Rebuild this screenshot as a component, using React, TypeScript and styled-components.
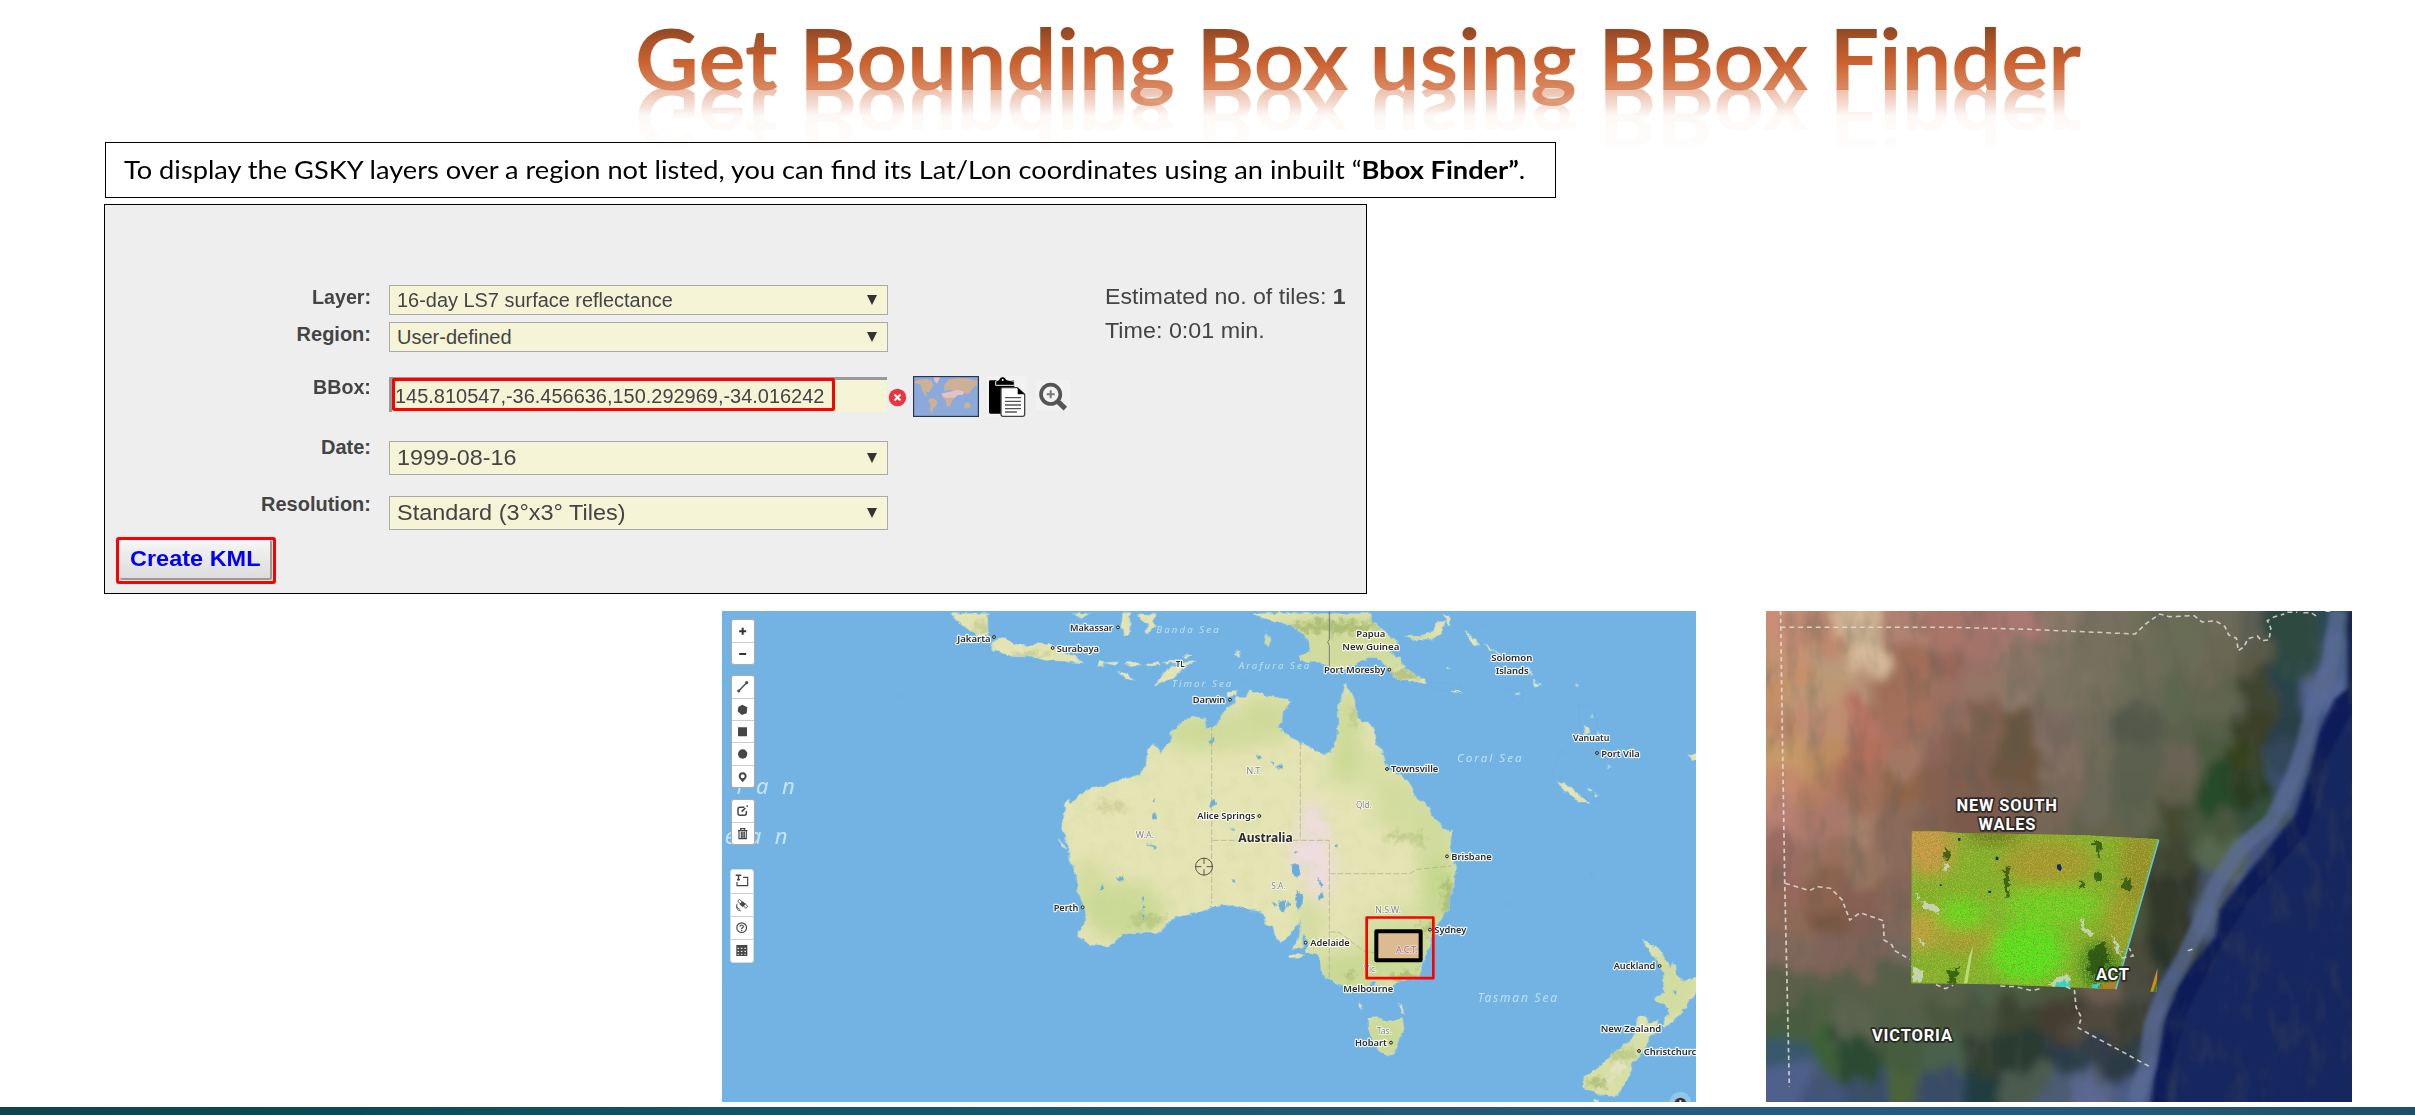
import React, { useLayoutEffect, useRef, useState } from 'react';
import styled, { createGlobalStyle } from 'styled-components';

const GlobalStyle = createGlobalStyle`
  * { box-sizing: border-box; }
  body { margin: 0; background: #fff; overflow: hidden; }
`;

const Slide = styled.main`
  display: flex;
  flex-direction: column;
  align-items: flex-start;
  width: 2415px;
  height: 1115px;
  overflow: hidden;
  background: #fff;
  font-family: 'Liberation Sans', Arial, sans-serif;
  color: #444;
`;

/* ---------- text that is condensed or widened to a set width ---------- */

const FitBox = styled.span<{ $origin: string }>`
  display: inline-block;
  white-space: nowrap;
  transform-origin: ${(p) => p.$origin} center;
`;

function Fit({ width, origin = 'left', children }: { width: number; origin?: string; children: React.ReactNode }) {
  const ref = useRef<HTMLSpanElement>(null);
  const [scale, setScale] = useState(1);
  useLayoutEffect(() => {
    if (ref.current) setScale(width / ref.current.offsetWidth);
  }, [width]);
  return (
    <FitBox ref={ref} $origin={origin} style={{ transform: `scaleX(${scale})` }}>
      {children}
    </FitBox>
  );
}

/* ---------- heading ---------- */

const TitleRow = styled.header`
  height: 142px;
  padding: 7px 0 0 635px;
`;

const Title = styled.h1`
  margin: 0;
  font: 700 84px/102px Lato, Carlito, Calibri, sans-serif;
`;

const TitleText = styled.span`
  position: relative;
  display: block;
  color: transparent;
  background: linear-gradient(#84421f 16px, #a9532a 34px, #cc6230 56px, #d98a63 82px, #e3a587 101px);
  -webkit-background-clip: text;
  background-clip: text;

  &::after {
    content: attr(data-text);
    position: absolute;
    left: 0;
    top: 61px;
    color: #d98058;
    transform: scaleY(-1);
    -webkit-mask-image: linear-gradient(to top, transparent 20px, rgba(0, 0, 0, 0.5) 21px, rgba(0, 0, 0, 0.28) 36px, rgba(0, 0, 0, 0.05) 48px, rgba(0, 0, 0, 0.02) 78px, transparent 82px);
    mask-image: linear-gradient(to top, transparent 20px, rgba(0, 0, 0, 0.5) 21px, rgba(0, 0, 0, 0.28) 36px, rgba(0, 0, 0, 0.05) 48px, rgba(0, 0, 0, 0.02) 78px, transparent 82px);
  }
`;

const Note = styled.p`
  flex: none;
  width: 1451px;
  height: 56px;
  margin: 0 0 0 105px;
  padding-left: 18px;
  border: 1.5px solid #000;
  background: #fff;
  font: 400 25px/53px Lato, Carlito, Calibri, sans-serif;
  color: #000;
`;

/* ---------- form ---------- */

const Panel = styled.section`
  display: flex;
  flex: none;
  width: 1263px;
  height: 390px;
  margin: 6px 0 0 104px;
  padding-top: 80px;
  border: 1.5px solid #000;
  background: #eee;
`;

const Fields = styled.div`
  flex: none;
  width: 1000px;
`;

const Row = styled.div<{ $gap: number }>`
  display: flex;
  align-items: flex-start;
  margin-bottom: ${(p) => p.$gap}px;
`;

const Label = styled.label<{ $lift?: number }>`
  width: 266px;
  height: 24px;
  margin-top: ${(p) => -(p.$lift ?? 0)}px;
  margin-right: 18px;
  text-align: right;
  font-size: 20px;
  font-weight: 700;
  line-height: 24px;
`;

const Select = styled.div<{ $tall?: boolean }>`
  display: flex;
  align-items: center;
  justify-content: space-between;
  width: 499px;
  height: ${(p) => (p.$tall ? 34 : 30)}px;
  padding: 0 10px 0 7px;
  border: 1.5px solid #a9a9a9;
  background: #f5f4d7;
  font-size: ${(p) => (p.$tall ? 22 : 20)}px;
  line-height: 24px;
`;

const Arrow = styled.span`
  width: 0;
  height: 0;
  border: solid transparent;
  border-width: 10px 5.5px 0;
  border-top-color: #333;
`;

const BoxInput = styled.div`
  width: 498px;
  height: 35px;
  border-top: 3px solid #999;
  border-left: 3px solid #999;
  background: #f5f4d7;
`;

const Highlight = styled.div`
  width: 443px;
  height: 33px;
  margin-top: -2px;
  border: 3px solid #f00;
  border-radius: 2px;
  font-size: 20px;
  line-height: 30px;
`;

const Tools = styled.div`
  display: flex;
  align-items: center;
  height: 41px;
  margin: -1px 0 -5px 1px;
`;

const KmlFrame = styled.div`
  width: 160px;
  height: 47px;
  margin-left: 11px;
  padding: 0 3px;
  border: 3px solid #f00;
  border-radius: 3px;
`;

const KmlButton = styled.button`
  display: block;
  width: 152px;
  height: 40px;
  margin-left: -2px;
  padding: 0 0 0 10px;
  border: 0 solid #999;
  border-width: 0 2px 2px 0;
  border-radius: 2px;
  background: linear-gradient(#f6f6f6, #dcdcdc);
  font: 700 21.5px/32px 'Liberation Sans', Arial, sans-serif;
  text-align: left;
  color: #00f;
`;

const Stats = styled.div`
  font-size: 22px;
  line-height: 33.5px;
  margin-top: -5px;
`;

const Stat = styled.div`
  height: 33.5px;
`;

const ClearIcon = () => (
  <svg width="19" height="41" viewBox="0 0 19 41">
    <circle cx="9.5" cy="21.5" r="8.7" fill="#ea3440" />
    <path d="M6.5 18.5l6 6m0-6l-6 6" stroke="#fff" strokeWidth="2.2" />
  </svg>
);

const WorldIcon = () => (
  <svg width="66" height="41" viewBox="162 45 198 123" style={{ marginLeft: 6 }}>
    <rect x="164" y="47" width="194" height="119" fill="#8ca9dc" />
    <g fill="#cdb096">
      <path d="M166 60l18-4 20-2 14 6 6 14-8 10-6 10-10-2 6 16 8 4-12-6-12-16-6-20-18-4z" />
      <path d="M212 112l12 0 12 10-6 14-8 8-2 14-6-8 0-20-6-10z" />
      <path d="M256 72l12-16 24-4 28 0 38 8-4 12-12 8-10 16-10 4-10-8-10 10-8-12-22-4-16 4z" />
      <path d="M250 98l24-2 14 12-10 14-4 14-10 2-4-20-12-10z" />
      <path d="M316 128l12-6 8 14-8 7-12-3z" />
    </g>
    <path d="M224 49h20l-10 18-8-6zM246 98l26-6 24-6 20 6-4 10-16 0-8 8-30 0z" fill="#e3c2ca" />
    <rect x="163.500" y="46.500" width="195" height="120" fill="none" stroke="#26364d" strokeWidth="4" />
  </svg>
);

const PasteIcon = () => (
  <svg width="40" height="41" viewBox="386 45 120 123" style={{ marginLeft: 8 }}>
    <rect x="386" y="45" width="120" height="123" fill="#f2f2f2" />
    <path d="M392 62q0-4 4-4h68q4 0 4 4v20h-36v76h-36q-4 0-4-4z" fill="#000" />
    <path d="M412 73v-12l10-5q2-9 11-9t11 9l24 5v12z" fill="#000" stroke="#f2f2f2" strokeWidth="3" />
    <circle cx="433" cy="57" r="3" fill="#fff" />
    <path d="M428 84q0-4 4-4h45l22 20v60q0 6-6 6h-59q-6 0-6-6z" fill="#fff" stroke="#444" strokeWidth="4" />
    <path d="M478 80v20h21z" fill="#000" />
    <path d="M440 110h48M440 121h48M440 132h48M440 143h48M440 153h36" stroke="#555" strokeWidth="4" />
  </svg>
);

const MagnifyIcon = () => (
  <svg width="34" height="41" viewBox="532 45 102 123" style={{ marginLeft: 9 }}>
    <rect x="532" y="58" width="102" height="90" fill="#f2f2f2" />
    <circle cx="576" cy="100" r="29" fill="none" stroke="#555" strokeWidth="11" />
    <path d="M576 88v24M564 100h24" stroke="#777" strokeWidth="6" />
    <path d="M598 122l22 21" stroke="#555" strokeWidth="15" />
  </svg>
);

/* ---------- street map ---------- */

const Maps = styled.section`
  display: flex;
  flex: none;
  gap: 70px;
  height: 491px;
  margin: 17px 0 0 722px;
`;

const MapFrame = styled.div<{ $w: number }>`
  position: relative;
  flex: none;
  width: ${(p) => p.$w}px;
  height: 491px;
  overflow: hidden;
  & > svg { display: block; }
`;

const Toolbar = styled.div`
  position: absolute;
  left: 9px;
  top: 8px;
  display: flex;
  flex-direction: column;
`;

const ToolGroup = styled.div<{ $gap: number; $plain?: boolean }>`
  width: 23.500px;
  margin-top: ${(p) => p.$gap}px;
  margin-left: ${(p) => (p.$plain ? -0.7 : 0)}px;
  border: 1px solid ${(p) => (p.$plain ? '#d5dce2' : '#b5a9a4')};
  border-radius: 3px;
  background: #fff;
  overflow: hidden;
`;

const Tool = styled.div<{ $h: number }>`
  height: ${(p) => p.$h}px;
  & + & { border-top: 1px solid #ccc; }
  svg { display: block; }
`;

const C = '#464646';
const glyphs: Record<string, React.ReactNode> = {
  plus: <path d="M32 23v21M21.500 33.500h21" stroke="#333" strokeWidth="6" />,
  minus: <path d="M21.500 33h21" stroke="#333" strokeWidth="6" />,
  line: <g stroke={C} fill={C}><path d="M20 45L44 20" strokeWidth="4" /><circle cx="20" cy="45" r="4" /><circle cx="44" cy="20" r="4" /></g>,
  polygon: <path d="M31 17l15 8-2 18-15 5-12-11 2-13z" fill={C} />,
  square: <path d="M18 19h27v27H18z" fill={C} />,
  circle: <circle cx="32" cy="33" r="14" fill={C} />,
  pin: <path fillRule="evenodd" d="M32 19c-8 0-12 6-12 12 0 7 8 12 12 18 4-6 12-11 12-18 0-6-4-12-12-12zm0 6a6 6 0 110 12 6 6 0 010-12z" fill={C} />,
  edit: <g fill="none" stroke={C} strokeWidth="4.500"><path d="M37 22H24q-6 0-6 6v12q0 6 6 6h13q6 0 6-6v-7" /><path d="M29 35l11-11" strokeWidth="5" /><path d="M44 20l3-3" strokeWidth="5" /></g>,
  trash: <g fill="none" stroke={C} strokeWidth="3.500"><path d="M18 23h28M26 22v-5h12v5M21 24v23h22V24M28 26v20M32.500 26v20M37 26v20" /></g>,
  textbox: <g fill="none" stroke={C} strokeWidth="3.500"><path d="M14 16h17M22.500 16v13M18 29h9" strokeWidth="4.500" /><path d="M36 22h14v25H18V36" /></g>,
  satellite: <g fill="none" stroke={C} strokeWidth="2.500"><path d="M20 21l6-5 8 9-6 5zM37 34l6-5 7 9-6 5z" /><path d="M27 31l8-8 8 7-8 8z" fill={C} /><path d="M17 35q1 10 10 11M18 29q-6 20 12 22" /></g>,
  help: <g fill="none" stroke={C}><circle cx="32" cy="32" r="14.500" strokeWidth="3.500" /><path d="M27 29q0-5 5-5t5 5q0 3-5 5v3M32 39v4" strokeWidth="3.500" /></g>,
  grid: <g><path d="M16 15h33v33H16z" fill={C} /><path d="M19.500 23h5v4h-5zM29.500 23h5v4h-5zM40 23h5v4h-5zM19.500 32h5v4h-5zM29.500 32h5v4h-5zM40 32h5v4h-5zM19.500 41h5v3h-5zM29.500 41h5v3h-5zM40 41h5v3h-5z" fill="#ddd" /></g>,
};

const groups = [
  { gap: 0, h: 22, items: ['plus', 'minus'] },
  { gap: 9.5, h: 22.3, items: ['line', 'polygon', 'square', 'circle', 'pin'] },
  { gap: 11, h: 22, items: ['edit', 'trash'] },
  { gap: 24.5, h: 22.8, items: ['textbox', 'satellite', 'help', 'grid'], plain: true },
];

type Place = [string, number, number, number];
const cities: Place[] = [
  ['Jakarta', -248, 125, 100], ['Makassar', 90, 92, 128], ['Surabaya', 50, 155, 127], ['TL', 407, 201, 27],
  ['Darwin', 458, 309, 98], ['Papua', 949, 112, 87], ['New Guinea', 907, 151, 171], ['Port Moresby', 852, 220, 184],
  ['Solomon', 1354, 184, 123], ['Islands', 1367, 223, 99], ['Vanuatu', 1599, 423, 109], ['Port Vila', 1684, 470, 115],
  ['Townsville', 1053, 517, 142], ['Alice Springs', 472, 658, 174], ['Brisbane', 1234, 780, 121], ['Perth', 41, 932, 74],
  ['Adelaide', 811, 1037, 118], ['Sydney', 1183, 998, 96], ['Melbourne', 910, 1175, 150], ['Hobart', 945, 1338, 95],
  ['Auckland', 1721, 1107, 125], ['New Zealand', 1682, 1297, 182], ['Christchurch', 1811, 1364, 176],
];
const dots = [[-138, 111], [234, 82], [38, 144], [570, 299], [1048, 209], [1671, 459], [1041, 507], [658, 648], [1221, 769], [128, 922], [797, 1028], [1170, 989], [1053, 1328], [1859, 1098], [1797, 1353]];
const states: Place[] = [
  ['N.T.', 619, 521, 48], ['W.A.', 287, 714, 55], ['S.A.', 694, 868, 43], ['Qld.', 948, 623, 47],
  ['N.S.W.', 1006, 939, 77], ['Vic.', 972, 1117, 40], ['Tas.', 1010, 1303, 46],
];
const seas: [string, number, number, number, number][] = [
  ['Banda Sea', 349, 99, 187, 29], ['Arafura Sea', 596, 206, 212, 29], ['Timor Sea', 396, 261, 178, 29],
  ['Coral Sea', 1251, 487, 194, 35], ['Tasman Sea', 1313, 1206, 238, 36],
];

const australia = 'M908 246L920 262 935 300 945 345 955 360 975 358 988 372 995 385 1002 420 1015 440 1025 480 1045 507 1070 517 1095 535 1110 560 1125 592 1145 603 1160 615 1165 640 1185 655 1205 675 1220 695 1226 682 1222 740 1230 770 1238 795 1234 840 1222 885 1218 920 1195 948 1180 965 1168 990 1160 1020 1148 1060 1135 1100 1130 1122 1100 1130 1060 1140 1040 1158 1015 1150 1000 1150 995 1135 982 1135 980 1150 940 1155 900 1150 870 1140 845 1118 832 1100 832 1075 820 1050 800 1045 785 1050 797 1028 790 1000 778 992 780 1032 750 1038 770 1005 776 945 768 962 745 990 715 1022 700 1005 690 975 670 965 668 940 650 925 625 922 580 907 515 912 480 925 450 933 400 943 375 958 355 990 325 988 270 990 240 995 215 1020 190 1030 150 1028 105 1000 107 985 125 965 130 940 128 920 105 860 103 820 78 765 80 740 66 700 58 680 60 650 68 625 65 605 78 590 85 605 110 580 140 558 180 552 230 535 280 520 310 490 315 440 335 422 355 450 370 425 385 420 385 390 410 365 450 340 485 350 490 375 510 375 525 365 540 330 570 310 580 285 610 285 620 262 645 270 665 280 690 283 730 290 745 295 735 315 720 325 718 350 705 375 730 395 765 415 800 435 845 458 865 450 882 410 887 360 888 310 900 280z';
const islands = 'M-275 33H-165V98L-180 103-215 85-245 65z M-148 120L-140 108-115 105-85 125-30 130-15 120 15 125 50 135 65 155 100 165 125 180 90 178 60 175 10 173-40 160-100 158-150 142z M630 33L660 45 720 60 760 80 785 95 800 125 802 150 770 160 775 175 830 175 870 200 900 200 935 185 960 172 1000 160 1030 190 1060 225 1100 235 1150 243 1145 228 1090 205 1070 165 1040 150 1065 120 1050 110 1020 85 1000 65 985 60 985 33z M1085 97L1130 100 1170 90 1185 60 1205 55 1192 90 1165 112 1120 112z M1200 35L1222 45 1222 68 1212 62 1212 48z M240 33h20l2 35-4 28-16-2-4-30z M285 33l55 3-10 18 10 15-15 10-5 15-10-8 5-22-20-12z M92 33h45l-20 14z M672 90l12 20-8 24-10-14z M222 206l32 8 20 18-24-4z M335 248l20-24 30-30 40-14 36-4-40 20-25 28z M575 160l18-20-8 24z M425 160l24-4-16 10z M168 176l20 4-8 14-18-6z M190 180l36-2-8 10zM245 182l30-6 20 8-30 8zM310 184l40-6 5 8-40 4zM362 180l36-8-4 12z M552 266l34-2-8 14-20 2z M976 1248L1000 1245 1020 1255 1050 1255 1080 1248 1083 1280 1068 1320 1055 1350 1035 1357 1015 1350 990 1320 978 1280z M740 1058l24-6 18 6-12 8-28 2z M952 1198l8 8-4 14-6-8z M1068 1206l12 10 4 18-10-8z M1800 1010L1825 1025 1850 1045 1870 1075 1885 1100 1893 1080 1900 1115 1925 1135 1968 1125V1155L1950 1175 1930 1210 1895 1255 1870 1272 1862 1265 1880 1235 1880 1215 1835 1190 1840 1180 1865 1170 1862 1110 1840 1070 1815 1035z M1785 1245L1810 1240 1815 1260 1845 1255 1840 1290 1815 1310 1810 1330 1795 1355 1765 1380 1760 1420 1740 1450 1725 1478 1700 1480 1670 1475 1640 1465 1618 1450 1625 1425 1660 1400 1700 1360 1740 1330 1775 1300 1785 1265z M1652 1490l16 0-4 16-10 0z M1266 80l12 14 22 16 8 20-16-8-18-24z M1324 124l26 18-12 0z M1350 142l32 20-16-6z M1468 234l26 12-14 4z M1455 190l14 30-12-14z M1546 536l30 14 34 26 28 26-22-2-38-26-24-22z M1622 372l14 4 2 14-10 6z M1940 456l28-6v24l-20-2z M1636 552l8 8-4 6zM1656 570l8 8-8 2zM1646 338l2 6-4 0zM1664 390l4 6-4 2zM1694 490l6 6-5 2zM1600 244l8 4-8 2zM1210 196l10 2-6 4zM1222 266l16 0 20 4-24 2zM1422 270l14 4-10 2zM46 708l28 32-18-10z';
const lakes = 'M498 605l20-12 4 16-18 6z M330 634l8 0 0 12-8 0z M642 458l8 0 0 10-8 0z M702 488l14 0 0 12-10-2z M686 478l8 2-4 6z M502 414l12-6 0 8-10 6z M748 782l20 4 4 30-8 12-14-14z M764 864l14 20-4 24-8 8-4-24z M824 884l14-16 4 18-16 6z M825 828l16 18-4 8z M708 894l18 2 4 16-8 16-10-18z M736 900l8 12-10 2z M690 902l14 6-10 4z M564 678l14 8-4 0z M570 832l6 0 0 6-6 0z M226 826l12-4 6 14-12-4z M176 842l8 12-8 8z M300 880l6 12-6 4z M300 908l8 6-6 8z M298 936l8 4-4 8z M878 728l10-2-4 10z M312 724l30 8-4 4z M1890 1164l10-2 0 10-8 0z M756 748l10-4-6 8z M334 592l5 4-5 2z';

const greens: [number, number, number, number, number][] = [
  [250, 930, 120, 90, 0.75], [140, 860, 60, 90, 0.5], [560, 380, 200, 60, 0.55], [680, 320, 80, 50, 0.55],
  [910, 400, 45, 140, 0.7], [950, 500, 110, 70, 0.35], [1080, 610, 90, 90, 0.5], [1180, 740, 60, 130, 0.6],
  [1190, 880, 60, 110, 0.85], [1090, 1060, 130, 80, 0.75], [920, 1110, 110, 70, 0.8], [800, 970, 40, 100, 0.5],
  [1030, 1300, 80, 70, 0.8], [440, 400, 110, 50, 0.35], [1060, 980, 120, 80, 0.4], [1740, 1380, 140, 120, 0.4],
  [900, 120, 280, 90, 0.6], [1880, 1150, 90, 110, 0.5],
];
const ridges: [number, number, number, number, number][] = [
  [1205, 870, 18, 60, 0.5], [1150, 965, 35, 16, 0.45], [1085, 1110, 50, 12, 0.6], [908, 1108, 8, 18, 0.6], [1060, 690, 50, 12, 0.35],
  [1120, 700, 14, 30, 0.3], [300, 940, 50, 20, 0.3], [860, 60, 140, 18, 0.55], [1080, 205, 45, 18, 0.5], [190, 600, 50, 16, 0.25],
  [1650, 1430, 30, 18, 0.5], [1730, 1345, 50, 16, 0.35], [-45, 145, 60, 8, 0.4], [-200, 60, 25, 20, 0.3], [925, 325, 10, 40, 0.3],
];

const StreetMap = () => (
  <svg width="974" height="491" viewBox="-954 33 2922 1473" fontFamily="'Noto Sans', 'Open Sans', sans-serif">
    <defs>
      <filter id="coast" x="-5%" y="-5%" width="110%" height="110%">
        <feTurbulence type="fractalNoise" baseFrequency="0.045" numOctaves="3" seed="4" result="n" />
        <feDisplacementMap in="SourceGraphic" in2="n" scale="16" xChannelSelector="R" yChannelSelector="G" />
      </filter>
      <filter id="soft" x="-50%" y="-50%" width="200%" height="200%"><feGaussianBlur stdDeviation="24" /></filter>
      <filter id="soft2" x="-50%" y="-50%" width="200%" height="200%">
        <feGaussianBlur stdDeviation="7" result="b" />
        <feTurbulence type="fractalNoise" baseFrequency="0.05" numOctaves="3" seed="9" result="n" />
        <feDisplacementMap in="b" in2="n" scale="50" xChannelSelector="R" yChannelSelector="G" />
      </filter>
      <filter id="relief" x="0" y="0" width="100%" height="100%">
        <feTurbulence type="fractalNoise" baseFrequency="0.022" numOctaves="5" seed="12" />
        <feColorMatrix values="0 0 0 0 .64  0 0 0 0 .72  0 0 0 0 .38  2.600 0 0 0 -1.250" />
      </filter>
      <clipPath id="land"><path d={australia + islands} /></clipPath>
    </defs>
    <rect x="-954" y="33" width="2922" height="1473" fill="#72b3e4" />
    <g fill="none" stroke="#5f9fd0" strokeWidth="2" opacity=".28">
      <path d="M1615 315l35 0 20 40 2 80-20 0-34-50zM1565 450l80 70 40 60-20 30-60-30-70-60zM1120 240l80 30 60 5 0-20zM1390 265l60 10-4 40-30-20zM590 240l40 0" />
      <circle cx="-171" cy="238" r="7" /><circle cx="-430" cy="288" r="8" /><circle cx="1340" cy="70" r="10" /><circle cx="1400" cy="910" r="9" /><circle cx="1660" cy="822" r="8" />
    </g>
    <g filter="url(#coast)">
      <g transform="translate(8 8)">
        <path d={australia + islands} fill="#e5e4b4" stroke="#8fc6ea" strokeWidth="4" paintOrder="stroke" />
        <g clipPath="url(#land)">
          <g filter="url(#soft)" fill="#c3d68c">
            {greens.map(([x, y, rx, ry, o], i) => <ellipse key={i} cx={x} cy={y} rx={rx} ry={ry} opacity={o} />)}
          </g>
          <g filter="url(#soft)" fill="#efdce0">
            <path d="M780 590l60 20 20 90 10 130-25 80-40-40-60-90-10-60 40-10z" /><circle cx="925" cy="810" r="16" opacity=".7" />
          </g>
          <rect x="-954" y="33" width="2922" height="1473" filter="url(#relief)" opacity=".4" />
          <g filter="url(#soft2)" fill="#8fa558">
            {ridges.map(([x, y, rx, ry, o], i) => <ellipse key={i} cx={x + 12} cy={y + 12} rx={rx} ry={ry} opacity={o} />)}
          </g>
          <g filter="url(#soft2)" fill="#f0e8e4" opacity=".6"><ellipse cx="1730" cy="1395" rx="24" ry="12" /><ellipse cx="1700" cy="1430" rx="14" ry="8" /></g>
        </g>
        <path d={lakes} fill="#69addd" stroke="#69addd" strokeWidth="2" />
      </g>
    </g>
    <g fill="none" stroke="#a9a78e" strokeWidth="2.200" strokeDasharray="18 6" opacity=".85">
      <path d="M515 375V910M781 430V721M518 721H868V1140M868 821H1110L1130 808 1235 798M868 995l32 3 40 32 35 25 40 5" />
    </g>
    <path d="M868 33v85l-5 8 5 10v66" fill="none" stroke="#777f76" strokeWidth="3" />
    <g fill="none" stroke="#3c3c34" strokeWidth="2.500">
      <circle cx="492" cy="800" r="25.500" />
      <path d="M492 774v18M492 808v18M466 800h18M500 800h18" />
    </g>
    <g fontStyle="italic" fill="#bfe0f5">
      {seas.map(([t, x, y, w, s]) => <text key={t} x={x} y={y} fontSize={s} textLength={w} lengthAdjust="spacing">{t}</text>)}
      <g fontSize="66" fill="#c4e6fa">
        <text x="-993 -910 -852 -774" y="582">dian</text>
        <text x="-1024 -946 -874 -796" y="733">cean</text>
      </g>
    </g>
    <rect x="1009" y="994" width="133" height="87" fill="#dfb391" fillOpacity=".82" stroke="#000" strokeWidth="12" strokeLinejoin="round" />
    <g fontSize="27" fill="#85858c" stroke="#fff" strokeWidth="5" strokeOpacity=".75" paintOrder="stroke" strokeLinejoin="round">
      {states.map(([t, x, y, w]) => <text key={t} x={x} y={y} textLength={w} lengthAdjust="spacingAndGlyphs">{t}</text>)}
      <text x="1068" y="1059" textLength="66" fill="#a865a6" strokeOpacity=".5">A.C.T.</text>
    </g>
    <g fontSize="28.500" fontWeight="600" fill="#2d2d2d" stroke="#fff" strokeWidth="7" strokeOpacity=".85" paintOrder="stroke" strokeLinejoin="round">
      {cities.map(([t, x, y, w]) => <text key={t} x={x} y={y} textLength={w} lengthAdjust="spacingAndGlyphs">{t}</text>)}
      <text x="595" y="727" fontSize="37" fontWeight="700" textLength="163" lengthAdjust="spacingAndGlyphs" strokeOpacity=".5">Australia</text>
    </g>
    <g fill="#d8d8cc" stroke="#222" strokeWidth="3">
      {dots.map(([x, y]) => <circle key={x} cx={x} cy={y} r="4.300" />)}
    </g>
    <rect x="979.500" y="952.500" width="200" height="182" transform="translate(.5 0)" fill="none" stroke="#f00" strokeWidth="8" strokeLinejoin="round" />
    <circle cx="1921" cy="1509" r="33" fill="#94c6e9" />
    <circle cx="1921" cy="1511" r="18" fill="#333" />
    <path d="M1921 1500v8" stroke="#fff" strokeWidth="5" />
  </svg>
);

/* ---------- satellite map ---------- */

const mosaic = [
  'c98e74 c08a70 d2b594 b08170 a87468 a3736a a97870 8b7868 78705f 6f7059 6a6c56 6c6a58 5f5f52 2f4840 2b4b5a',
  'c49272 b89a78 d4b898 a06e58 98685a 987266 8c7565 7e7464 76705f 6e6c58 6b6d57 6a6852 5a5a46 2c4844 4a5f86',
  'c69068 bd9874 b99478 a2705a 9a7060 947666 8c7868 7c7260 766f5d 6c6c58 5f6650 626650 3f4430 2a4348 56689a',
  'c08a68 bf8d72 b87464 a4705f 967060 80624f 695640 7c6a60 706c5c 54594c 5d624e 565f48 3b4128 2a4048 39507e',
  'c59a68 bc8c60 b0705c a27864 8c6558 7e5e50 6c563f 846f64 6f6b59 5b6050 6a6454 4e5c40 36401f 30475c 3c4f7c',
  'c48a6c b37c62 a06f5a 90664c 85604f 7e5c50 735a46 7a6a5c 6a6858 5a604e 62604e 284c2c 2a3c22 42577c 2c3f74',
  'b68072 a8786a a47f6a 8c6a58 80604f 7b5a4c 745c48 766654 64644e 5e6450 45492f 46563c 34503c 50638c 24367a',
  '9a6c62 98705c 987560 8a6a5a 806050 7c6250 746050 706850 606048 4c553a 404430 566850 44547e 5a6b98 1c2c62',
  '94685a 8c6450 866052 856658 7c6452 766454 70624c 686448 5c6044 4c5238 30382a 47526a 5c6b94 203268 16265a',
  '8e6a58 7a5844 806054 80685a 786452 706450 6a6048 646048 5a5c40 4a5238 30382c 50607c 42548a 142860 16285c',
  '80685c 80645a 7a6458 70685c 6c6450 686450 606048 5a5c44 505840 484c38 2a342c 3c4c6c 1c2e66 162a60 18285e',
  '5c6048 5c6048 58604c 586048 566048 506048 4e5c40 4c543c 6a5c50 4c4c3c 243448 22366c 142a60 162860 18285e',
  '465c40 506040 5c6450 526048 4c583c 485440 3c4430 443c30 50483c 3e4034 3c4c70 1c2c66 142a5e 16285c 18265c',
  '38586c 3c6038 2c4c30 445c3c 48604c 304030 2a3a30 2c3c48 303c48 2a3a44 50608c 14225a 162858 16245a 182860',
  '50608c 42547c 38506c 4c6438 384c68 243c40 4c5c50 4c5c74 5c6890 4c5c84 36447a 18205a 1a2460 182458 1a2860',
].map((r) => r.split(' '));

const SatelliteMap = () => (
  <svg width="586" height="491" viewBox="0 0 586 491">
    <defs>
      <filter id="blend" x="-5%" y="-5%" width="110%" height="110%">
        <feTurbulence type="fractalNoise" baseFrequency="0.035 0.016" numOctaves="3" seed="3" result="n" />
        <feDisplacementMap in="SourceGraphic" in2="n" scale="62" xChannelSelector="R" yChannelSelector="G" result="d" />
        <feGaussianBlur in="d" stdDeviation="5" />
      </filter>
      <filter id="blur6" x="-20%" y="-20%" width="140%" height="140%"><feGaussianBlur stdDeviation="5" /></filter>
      <filter id="blur12" x="-50%" y="-50%" width="200%" height="200%"><feGaussianBlur stdDeviation="22" /></filter>
      <filter id="grain" x="0" y="0" width="100%" height="100%">
        <feTurbulence type="fractalNoise" baseFrequency="0.05 0.022" numOctaves="3" seed="6" />
        <feColorMatrix values="0 0 0 0 .08  0 0 0 0 .1  0 0 0 0 .08  2.400 0 0 0 -1.150" />
      </filter>
      <filter id="speckDark" x="0" y="0" width="100%" height="100%">
        <feTurbulence type="fractalNoise" baseFrequency="0.42" numOctaves="3" seed="2" />
        <feColorMatrix values="0 0 0 0 .2  0 0 0 0 .3  0 0 0 0 .03  5 0 0 0 -2.600" />
      </filter>
      <filter id="speckRed" x="0" y="0" width="100%" height="100%">
        <feTurbulence type="fractalNoise" baseFrequency="0.3" numOctaves="4" seed="15" />
        <feColorMatrix values="0 0 0 0 .75  0 0 0 0 .46  0 0 0 0 .12  0 5 0 0 -2.450" />
      </filter>
      <filter id="rough" x="-20%" y="-20%" width="140%" height="140%">
        <feTurbulence type="fractalNoise" baseFrequency="0.07" numOctaves="3" seed="7" result="n" />
        <feDisplacementMap in="SourceGraphic" in2="n" scale="26" xChannelSelector="R" yChannelSelector="G" />
      </filter>
      <clipPath id="scene"><path d="M397 694L470 694 520 699 855 706 1043 718 930 1168 620 1153 395 1150z" /></clipPath>
    </defs>
    <g filter="url(#blend)">
      {mosaic.map((row, r) => row.map((c, i) => (
        <rect key={`${r}-${i}`} x={i * 39.07 - (i === 0 ? 40 : 0)} y={r * 32.8 - (r === 0 ? 40 : 0)} width={i === 0 || i === 14 ? 90 : 40} height={r === 0 || r === 14 ? 80 : 33.500} fill={`#${c}`} />
      )))}
    </g>
    <g transform="scale(.38276 .33333) translate(-16 -33)">
      <g filter="url(#blur6)">
        <path d="M1510 33L1490 200 1440 350 1420 450 1380 570 1340 660 1250 750 1190 860 1160 950 1110 1070 1060 1170 1025 1270 1010 1400 980 1506" fill="none" stroke="#5c6c98" strokeWidth="44" opacity=".75" />
        <path d="M1570 230L1500 300 1460 400 1435 520 1400 640 1330 740 1260 840 1200 930 1190 1010 1130 1090 1090 1160 1060 1250 1045 1340 1030 1440 1020 1530H1570z" fill="#111f58" />
        <path d="M1560 310L1480 480 1430 700 1280 900 1200 1050 1110 1250 1060 1530H1570z" fill="#18285f" />
        <path d="M1535 33h30v280h-30z" fill="#13204f" />
      </g>
    </g>
    <rect width="586" height="491" filter="url(#grain)" opacity=".3" />
    <g transform="scale(.38276 .33333) translate(-16 -33)">
      <g clipPath="url(#scene)">
        <rect x="380" y="680" width="680" height="500" fill="#7db527" />
        <g filter="url(#blur12)">
          <ellipse cx="440" cy="740" rx="70" ry="90" fill="#c99a44" />
          <ellipse cx="420" cy="990" rx="50" ry="60" fill="#bea23e" />
          <ellipse cx="750" cy="790" rx="120" ry="70" fill="#a39a2c" />
          <ellipse cx="540" cy="1020" rx="80" ry="40" fill="#a69d2e" />
          <ellipse cx="990" cy="800" rx="50" ry="120" fill="#918f20" />
          <ellipse cx="610" cy="705" rx="70" ry="20" fill="#5f6614" />
          <ellipse cx="700" cy="1060" rx="100" ry="90" fill="#4cea14" />
          <ellipse cx="530" cy="940" rx="60" ry="50" fill="#5ce018" />
          <ellipse cx="760" cy="920" rx="130" ry="60" fill="#66d81c" />
          <ellipse cx="940" cy="960" rx="30" ry="90" fill="#a09828" />
          <ellipse cx="890" cy="1100" rx="45" ry="75" fill="#1c6a14" />
        </g>
      </g>
    </g>
    <g clipPath="url(#sceneWrap)" />
    <g transform="scale(.38276 .33333) translate(-16 -33)">
      <g clipPath="url(#scene)">
        <rect x="380" y="680" width="680" height="500" filter="url(#speckRed)" opacity=".5" />
        <rect x="380" y="680" width="680" height="500" filter="url(#speckDark)" opacity=".65" />
        <g filter="url(#rough)">
          <path d="M480 735l15 20 0 25-12 0zM640 800l12 0-2 90-10-10zM876 815l20 0-4 30-16 0zM840 840l12 14-14 8zM950 835l24 10-6 24-20-4zM870 720l24 0-8 60zM860 1060l40-40 10 60-20 40-30 0zM490 1110l30-6-10 44-20 0z" fill="#2c5210" opacity=".8" />
          <path d="M425 905l30 8 20 20-10 8-40-20zM405 880l12 8-8 14zM480 790l16 10-10 12zM400 1100l30 14-10 30-20 2zM410 1010l20 14-8 16zM845 950l8 34 26 18-20 2-22-22zM920 1000l14 30 10 40-14-18zM800 1120l12 24-50 20-5-14z" fill="#cfd8c4" opacity=".85" />
          <path d="M770 1150l40-6 0 20-40 0zM868 1150l18 0-2 20-16 0z" fill="#3ecfc0" />
          <path d="M890 1150l40 0 0 20-40 0z" fill="#b08020" />
        </g>
        <path d="M558 1035L546 1070 533 1150h9z" fill="#b8dc70" />
        <path d="M776 794l9-2 4 12-4 10-8-6zM616 770h7v10h-7zM597 872h7v7h-7zM518 714h6v8h-6zM470 853h5v5h-5z" fill="#0c2c6a" />
      </g>
      <path d="M1042 720L930 1168" stroke="#61c6d8" strokeWidth="4" />
      <path d="M1039 1103L1036 1175H1020z" fill="#d98a18" /><path d="M1038 1140l-3 35h-8z" fill="#1a8a1c" />
    </g>
    <g transform="scale(.38276 .33333) translate(-16 -33)" fill="none" stroke="#e2ded8" strokeWidth="4.500" strokeDasharray="13 10" opacity=".85">
      <path d="M54 33L60 500 65 850 77 1460" />
      <path d="M54 82H500L700 88 980 102 1010 70 1045 42 1070 50 1135 47 1155 66 1190 62 1215 80 1225 105 1245 115 1250 152 1265 140 1275 116 1300 108 1310 122 1330 120 1335 85 1326 62 1345 50 1370 42" />
      <path d="M1378 37l26 0M1420 38l20 0 14 10M1478 34h12" />
      <path d="M66 850L130 872 150 860 185 865 215 900 235 960 262 938 322 962 325 1020 345 1035 352 1052 392 1078" />
      <path d="M460 1154l25 12 20-10M628 1158l40 2 42 12 30-8M800 1160l22 12 4 50 14 30-8 32 185 115" />
      <path d="M945 1074l30-6-10-24M1118 1052l12-4" />
    </g>
    <g transform="translate(-1766 -611)" fontFamily="Roboto, sans-serif" fontWeight="700" fontSize="16.500" fill="#fff" stroke="#1c1c1c" strokeWidth="3.500" strokeOpacity=".8" paintOrder="stroke" strokeLinejoin="round">
      <text x="1956.500" y="811" textLength="100.500">NEW SOUTH</text>
      <text x="1978.500" y="830" textLength="57">WALES</text>
      <text x="2096" y="979.700" textLength="33">ACT</text>
      <text x="1872" y="1041" textLength="80">VICTORIA</text>
    </g>
  </svg>
);

const Footer = styled.footer`
  flex: none;
  width: 100%;
  height: 8px;
  margin-top: 5px;
  background: linear-gradient(90deg, #0f444c 0, #0b4a55 14%, #12505f 24%, #18566f 42%, #255876 60%, #265b7e 74%, #235878 88%, #1e4f66 100%);
`;

export default function App() {
  const heading = 'Get Bounding Box using BBox Finder';
  return (
    <Slide>
      <GlobalStyle />
      <TitleRow>
        <Title>
          <Fit width={1446}><TitleText data-text={heading}>{heading}</TitleText></Fit>
        </Title>
      </TitleRow>
      <Note>
        <Fit width={1401}>
          To display the GSKY layers over a region not listed, you can find its Lat/Lon coordinates using an inbuilt “<b>Bbox Finder”</b>.
        </Fit>
      </Note>
      <Panel>
        <Fields>
          <Row $gap={6.5}>
            <Label><Fit width={59} origin="right">Layer:</Fit></Label>
            <Select><Fit width={276}>16-day LS7 surface reflectance</Fit><Arrow /></Select>
          </Row>
          <Row $gap={25}>
            <Label><Fit width={74} origin="right">Region:</Fit></Label>
            <Select><Fit width={115}>User-defined</Fit><Arrow /></Select>
          </Row>
          <Row $gap={29.5}>
            <Label $lift={2}><Fit width={58} origin="right">BBox:</Fit></Label>
            <BoxInput><Highlight><Fit width={429}>145.810547,-36.456636,150.292969,-34.016242</Fit></Highlight></BoxInput>
            <Tools><ClearIcon /><WorldIcon /><PasteIcon /><MagnifyIcon /></Tools>
          </Row>
          <Row $gap={21}>
            <Label $lift={6}><Fit width={50} origin="right">Date:</Fit></Label>
            <Select $tall><Fit width={120}>1999-08-16</Fit><Arrow /></Select>
          </Row>
          <Row $gap={7}>
            <Label $lift={4}><Fit width={110} origin="right">Resolution:</Fit></Label>
            <Select $tall><Fit width={228}>Standard (3°x3° Tiles)</Fit><Arrow /></Select>
          </Row>
          <KmlFrame><KmlButton><Fit width={130}>Create KML</Fit></KmlButton></KmlFrame>
        </Fields>
        <Stats>
          <Stat><Fit width={241}>Estimated no. of tiles: <b>1</b></Fit></Stat>
          <Stat><Fit width={160}>Time: 0:01 min.</Fit></Stat>
        </Stats>
      </Panel>
      <Maps>
        <MapFrame $w={974}>
          <StreetMap />
          <Toolbar>
            {groups.map((g) => (
              <ToolGroup key={g.items[0]} $gap={g.gap} $plain={g.plain}>
                {g.items.map((n) => (
                  <Tool key={n} $h={g.h}>
                    <svg width="22" height="22" viewBox="0 0 66 66">{glyphs[n]}</svg>
                  </Tool>
                ))}
              </ToolGroup>
            ))}
          </Toolbar>
        </MapFrame>
        <MapFrame $w={586}><SatelliteMap /></MapFrame>
      </Maps>
      <Footer />
    </Slide>
  );
}
